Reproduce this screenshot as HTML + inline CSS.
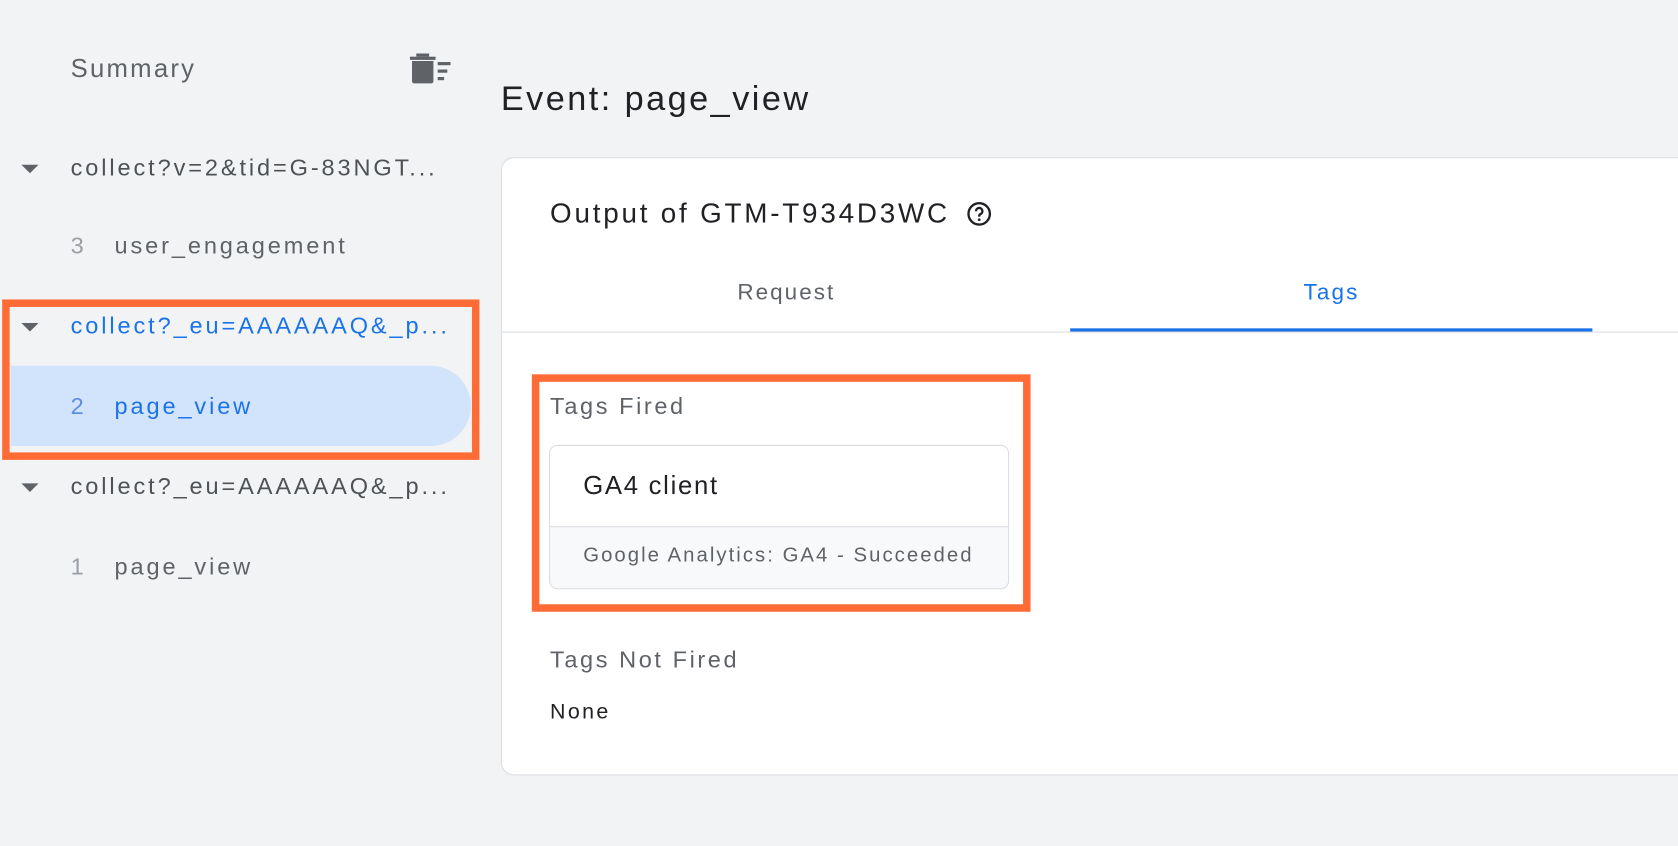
<!DOCTYPE html>
<html><head><style>
html,body{margin:0;padding:0;width:1678px;height:846px;overflow:hidden;background:#f1f3f4;}
#w{position:absolute;left:0;top:0;width:1568px;height:791px;transform:scale(1.07015,1.0695);transform-origin:0 0;font-family:"Liberation Sans",Arial,sans-serif;}
.a{position:absolute;white-space:nowrap;}
.tri{position:absolute;width:0;height:0;border-left:8px solid transparent;border-right:8px solid transparent;border-top:8px solid #5f6368;}
.g{color:#5f6368;font-size:22px;letter-spacing:2.7px;}
</style></head><body><div id="w">
<div class="a" style="left:66px;top:51px;font-size:24px;color:#5f6368;letter-spacing:2.1px">Summary</div>
<svg class="a" style="left:383px;top:50px" width="40" height="30" viewBox="0 0 40 30">
<rect x="6" y="0" width="12" height="3" fill="#5f6368"/><rect x="0" y="3" width="24" height="3" fill="#5f6368"/>
<path d="M2 7h20v19a2 2 0 0 1-2 2H4a2 2 0 0 1-2-2z" fill="#5f6368"/>
<rect x="26" y="8" width="12" height="3" fill="#5f6368"/><rect x="26" y="15" width="9" height="3" fill="#5f6368"/><rect x="26" y="22" width="6" height="3" fill="#5f6368"/>
</svg>
<div class="tri" style="left:20px;top:154px"></div>
<div class="a g" style="left:66px;top:144px;color:#4e5256">collect?v=2&amp;tid=G-83NGT...</div>
<div class="a g" style="left:66px;top:217px;color:#9aa0a6">3</div>
<div class="a g" style="left:107px;top:217px">user_engagement</div>
<div class="a" style="left:10px;top:342px;width:430px;height:75px;background:#d2e3fc;border-radius:0 38px 38px 0"></div>
<div class="tri" style="left:20px;top:302px"></div>
<div class="a g" style="left:66px;top:292px;color:#1a73e8">collect?_eu=AAAAAAQ&amp;_p...</div>
<div class="a g" style="left:66px;top:367px;color:#5b8fe0">2</div>
<div class="a g" style="left:107px;top:367px;color:#1a73e8">page_view</div>
<div class="a" style="left:2px;top:280px;width:432px;height:136px;border:7px solid #ff6b35"></div>
<div class="tri" style="left:20px;top:452px"></div>
<div class="a g" style="left:66px;top:442px;color:#4e5256">collect?_eu=AAAAAAQ&amp;_p...</div>
<div class="a g" style="left:66px;top:517px;color:#9aa0a6">1</div>
<div class="a g" style="left:107px;top:517px">page_view</div>
<div class="a" style="left:468px;top:74px;font-size:32px;color:#202124;letter-spacing:2.3px">Event: page_view</div>
<div class="a" style="left:468px;top:147px;width:1120px;height:576px;background:#fff;border:1px solid #dadce0;border-radius:12px"></div>
<div class="a" style="left:514px;top:184px;font-size:26px;color:#202124;letter-spacing:2.6px">Output of GTM-T934D3WC</div>
<svg class="a" style="left:903px;top:188px" width="24" height="24" viewBox="0 0 24 24"><circle cx="12" cy="12" r="10" fill="none" stroke="#202124" stroke-width="2.2"/><path d="M9 9.5a3 3 0 1 1 4.2 2.7c-.8.4-1.2 1-1.2 1.8v.6" fill="none" stroke="#202124" stroke-width="2.2"/><circle cx="12" cy="17.5" r="1.3" fill="#202124"/></svg>
<div class="a" style="left:689px;top:262px;font-size:21px;color:#5f6368;letter-spacing:1.9px">Request</div>
<div class="a" style="left:1218px;top:262px;font-size:21px;color:#1a73e8;letter-spacing:2px">Tags</div>
<div class="a" style="left:469px;top:310px;width:1100px;height:1px;background:#dadce0"></div>
<div class="a" style="left:1000px;top:307px;width:488px;height:3px;background:#1a73e8"></div>
<div class="a" style="left:514px;top:367px;font-size:22px;color:#5f6368;letter-spacing:2.4px">Tags Fired</div>
<div class="a" style="left:513px;top:416px;width:428px;height:133px;border:1px solid #dadce0;border-radius:8px;overflow:hidden;background:#f8f9fa">
<div style="height:75px;background:#fff;border-bottom:1px solid #dadce0"></div></div>
<div class="a" style="left:545px;top:441px;font-size:24px;color:#202124;letter-spacing:1.6px">GA4 client</div>
<div class="a" style="left:545px;top:509px;font-size:19px;color:#5f6368;letter-spacing:1.9px">Google Analytics: GA4 - Succeeded</div>
<div class="a" style="left:497px;top:350px;width:452px;height:208px;border:7px solid #ff6b35"></div>
<div class="a" style="left:514px;top:604px;font-size:22px;color:#5f6368;letter-spacing:2.4px">Tags Not Fired</div>
<div class="a" style="left:514px;top:655px;font-size:20px;color:#202124;letter-spacing:2.2px">None</div>
</div></body></html>
